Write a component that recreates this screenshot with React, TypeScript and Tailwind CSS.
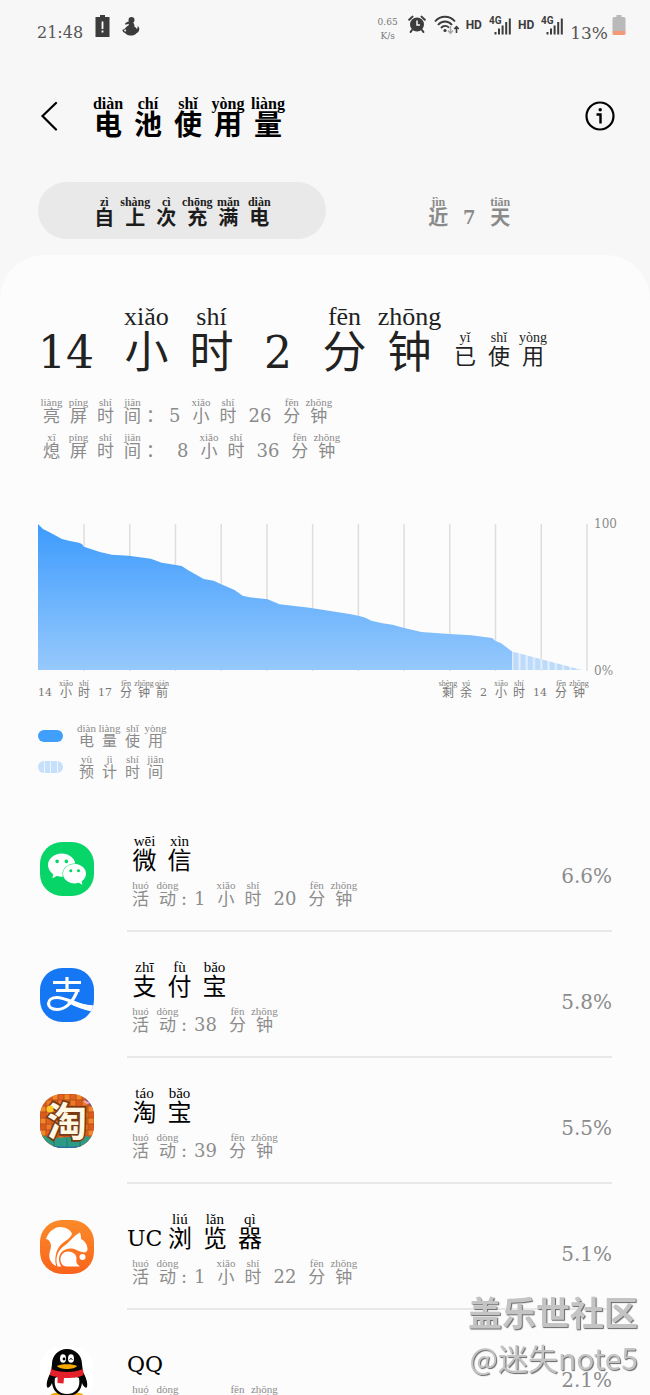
import { useState } from 'react';
import type { ReactNode } from 'react';
import { SiWechat } from 'react-icons/si';

interface Size {
  cell: string;
  han: string;
  pinyin: string;
  num: string;
  punct: string;
}

const sizes: Record<string, Size> = {
  title: { cell: 'w-10', han: 'text-[28px] leading-7 font-bold', pinyin: 'text-base leading-4 font-bold', num: '', punct: '' },
  tab: { cell: 'w-[31px]', han: 'text-xl leading-5 font-bold', pinyin: 'text-xs leading-3 font-bold', num: 'w-[31px] text-center text-lg leading-5 font-bold', punct: '' },
  hero: { cell: 'w-[65px]', han: 'text-[44px] leading-[44px]', pinyin: 'text-[26px] leading-7', num: 'mx-5 first:ml-0 text-[44px] leading-[44px]', punct: '' },
  heroNote: { cell: 'w-[34px]', han: 'text-[22px] leading-6', pinyin: 'text-sm leading-[14px]', num: '', punct: '' },
  line: { cell: 'w-[27px]', han: 'text-[17px] leading-4', pinyin: 'text-[11px] leading-3', num: 'mx-[7px] text-lg leading-4', punct: 'w-4 text-lg leading-4' },
  activity: { cell: 'w-[27px]', han: 'text-[17px] leading-4', pinyin: 'text-[11px] leading-3', num: 'mx-[7px] text-lg leading-4', punct: 'w-1.5 text-center text-lg leading-4' },
  axis: { cell: 'w-[18px]', han: 'text-xs leading-[10px]', pinyin: 'text-[8px] leading-2', num: 'mx-[5px] first:ml-0 text-[11px] leading-[10px]', punct: '' },
  legend: { cell: 'w-[23px]', han: 'text-[15px] leading-4', pinyin: 'text-[11px] leading-[10px]', num: '', punct: '' },
  name: { cell: 'w-[35px]', han: 'text-2xl leading-6', pinyin: 'text-[15px] leading-4', num: 'text-[22px] leading-6', punct: '' },
};

// "小xiǎo 时shí 2" -> each CJK char carries its reading, everything else is printed as is.
// A doubled space leaves an empty token, which is a small spacer.
function Pinyin({ text, size, className = '' }: { text: string; size: keyof typeof sizes; className?: string }) {
  const s = sizes[size];
  return (
    <span className={`inline-flex items-end whitespace-nowrap ${className}`}>
      {text.split(' ').map((token, i) => {
        if (token === '') return <span key={i} className="w-2" />;
        if (/^[\u4e00-\u9fff]/.test(token)) {
          return (
            <ruby key={i} className={`flex flex-col-reverse items-center ${s.cell} ${s.han}`}>
              {token[0]}
              <rt className={`font-['Liberation_Serif',serif] ${s.pinyin}`}>{token.slice(1)}</rt>
            </ruby>
          );
        }
        const isPunct = token === ':' || token === '：';
        return <span key={i} className={isPunct ? s.punct : s.num}>{token}</span>;
      })}
    </span>
  );
}

function AlarmIcon() {
  return (
    <svg viewBox="0 0 18 18" className="mr-0.5 size-[18px]" fill="none" stroke="#3c3c3c">
      <circle cx="9" cy="9.5" r="7" fill="#3c3c3c" stroke="none" />
      <path d="M1.200 4.800 L4.500 1.600 M16.800 4.800 L13.500 1.600 M4 15 L2.600 17 M14 15 L15.400 17" strokeWidth="2" strokeLinecap="round" />
      <path d="M9 5.5 V10 H12" stroke="#f7f7f7" strokeWidth="1.5" />
    </svg>
  );
}

function WifiIcon() {
  return (
    <svg viewBox="0 0 26 20" className="h-5 w-[26px]" fill="none" stroke="#3c3c3c" strokeWidth="1.9">
      <path d="M1 6.5 C6.5 .2 15.5 .2 21 6.5 M4 10 C8 5.4 14 5.4 18 10 M7 13 C9.4 10.4 12.6 10.4 15 12.6" />
      <circle cx="11" cy="15.5" r="1.6" fill="#3c3c3c" stroke="none" />
      <path d="M16.5 11 V17.5 M14 15.5 L16.5 18.3 L19 15.5" stroke="#aaa" strokeWidth="1.5" />
      <path d="M22.5 18 V12 M20.3 14 L22.5 11.7 L24.7 14" strokeWidth="1.6" />
    </svg>
  );
}

function Signal() {
  return (
    <span className="flex items-start gap-[7px]">
      <span className="pt-0.5 font-[Roboto,sans-serif] text-xs leading-4 font-bold">HD</span>
      <svg viewBox="0 0 23 20" className="h-5 w-[23px]" fill="#3c3c3c">
        <text x="0" y="8.500" fontFamily="Roboto, sans-serif" fontSize="10" fontWeight="700">4G</text>
        <path d="M5.5 17h2v2.500h-2z M9 13.500h2v6H9z M12.600 10.500h2v9h-2z M16.200 7h2v12.500h-2z M19.800 3.500h2v16h-2z" />
      </svg>
    </span>
  );
}

function StatusBar() {
  return (
    <div className="flex h-12 items-start justify-between pt-[15px] pr-6 pl-[37px] text-[#3c3c3c]">
      <div className="flex items-start gap-3">
        <span className="pt-2 text-base leading-5 text-[#555]">21:48</span>
        <svg viewBox="0 0 15 22" className="h-[22px] w-[15px]">
          <path d="M5 0h5v2h4.5v20H.5V2H5z" fill="#3c3c3c" />
          <path d="M7.5 6.5v7.5 M7.5 15.5v2" stroke="#fff" strokeWidth="1.8" />
        </svg>
        <svg viewBox="0 0 18 20" className="mt-px h-5 w-[18px]" fill="#3c3c3c">
          <circle cx="9.5" cy="4" r="3" />
          <path d="M3 7.6 C4.5 6 6.5 5.4 8 5.6 L10.5 6 C12.5 7.5 12.6 9.5 12.4 10.8 C14 11.4 14.6 12.4 14.6 13 C15.6 12.6 16 11 15.4 9.8 C18.5 11.5 17.5 16 14.5 17.2 C12.5 20 6 20.5 3.6 17.4 C1.6 17 .2 15.5 .4 13.8 C3 14 3.4 11 6.4 9.6 L7 7.8 L3.4 8.8z" />
          <circle cx="3.2" cy="14.6" r="1" fill="#f7f7f7" />
        </svg>
      </div>
      <div className="flex items-start gap-1.5">
        <span className="mr-1 text-center text-[9px] leading-[14px] text-[#777]">0.65<br />K/s</span>
        <AlarmIcon />
        <WifiIcon />
        <Signal />
        <Signal />
        <span className="flex items-start gap-1">
          <span className="pt-2 text-[17px] leading-5 text-[#555]">13%</span>
          <svg viewBox="0 0 14 20" className="h-5 w-3.5">
            <path d="M4.5 0h5v2H12a1.5 1.5 0 0 1 1.5 1.5V16H.5V3.500A1.5 1.5 0 0 1 2 2h2.500z" fill="#b9b9b9" />
            <path d="M.5 16h13v2.500a1.5 1.5 0 0 1-1.500 1.500H2A1.500 1.500 0 0 1 .5 18.500z" fill="#f29a78" />
          </svg>
        </span>
      </div>
    </div>
  );
}

const levels: [number, number][] = [
  [0, 0], [5, 5], [12, 8.5], [24, 15], [32, 17], [41, 18.7], [44, 20], [46, 22.7], [62, 28], [74, 30.7],
  [91, 31.7], [113, 34.7], [124, 38.7], [132, 40], [144, 42], [150, 46], [155, 48.7], [166, 55], [176, 56.7],
  [183, 60], [197, 66], [205, 71.7], [212, 73.3], [230, 75.3], [242, 80.3], [272, 83.7], [312, 90], [322, 92],
  [328, 93.7], [334, 96.7], [345, 99.3], [355, 100.7], [367, 104], [384, 108], [412, 110], [434, 111.3],
  [455, 114], [458, 116.7], [464, 119.3], [475, 127.5],
];

function BatteryChart() {
  const area = levels.map(([x, y]) => `L${x} ${y}`).join(' ');
  return (
    <svg viewBox="0 0 551 147" preserveAspectRatio="none" className="h-[147px] min-w-0 flex-1" role="img" aria-label="电量使用">
      <defs>
        <linearGradient id="usage" x1="0" y1="0" x2="0" y2="1">
          <stop offset="0" stopColor="#3d9bfd" />
          <stop offset="1" stopColor="#96c9fc" />
        </linearGradient>
        <pattern id="stripes" width="7.3" height="147" patternUnits="userSpaceOnUse">
          <rect width="7.3" height="147" fill="#e3effc" />
          <rect x="1.500" width="5.300" height="147" fill="#bddafa" />
        </pattern>
      </defs>
      {Array.from({ length: 12 }, (_, i) => (
        <rect key={i} x={45.4 + i * 45.8} y="0" width="1.5" height="147" fill="#dedede" />
      ))}
      <path d={`M0 146 ${area} L475 146z`} fill="url(#usage)" />
      <path d="M475 127.5 L545 146 H475z" fill="url(#stripes)" />
    </svg>
  );
}

function AlipayLogo() {
  return (
    <svg viewBox="0 0 54 54" className="size-full" fill="none" stroke="#fff" strokeWidth="3.200">
      <path d="M27 9 V23 M13 14.500 H41 M16 22.500 H39.500" />
      <path d="M37.500 22 C34 32 27 41.500 17 41.500 C11 41.500 8.500 38.500 8.500 35.500 C8.500 32 12 29.500 17 29.500 C24 29.500 34 35 46 38.500" />
      <path d="M30 32.500 C38 35.500 45 36.500 54 37.500 L51.500 43.500 C44 42 35 39 27 34z" fill="#fff" stroke="none" />
    </svg>
  );
}

function TaobaoLogo() {
  return (
    <svg viewBox="0 0 54 54" className="size-full">
      <defs>
        <pattern id="bricks" width="12" height="12" patternUnits="userSpaceOnUse">
          <rect width="12" height="12" fill="#b9501a" />
          <rect x=".5" y=".5" width="5" height="5" fill="#f0872a" />
          <rect x="6.500" y=".5" width="5" height="5" fill="#e2631f" />
          <rect x=".5" y="6.500" width="5" height="5" fill="#de5a1c" />
          <rect x="6.500" y="6.500" width="5" height="5" fill="#ee7a25" />
        </pattern>
      </defs>
      <rect width="54" height="54" fill="url(#bricks)" />
      <path d="M42 0 H54 V14 L48 10z" fill="#6d5ba8" />
      <path d="M44 7 l3 2 l3 -1" stroke="#f4a6c0" strokeWidth="2" fill="none" />
      <path d="M0 40 C12 48 36 40 54 43 V54 H0z" fill="#2d9a86" />
      <path d="M0 49 C16 54 40 54 54 49 V54 H0z" fill="#2a6fb0" />
      <path d="M14 44 V54 M27 44 V54 M40 43 V54" stroke="#1f7a6c" />
      <text x="27" y="42" textAnchor="middle" fontSize="40" fontWeight="700" fontFamily="'Noto Sans CJK SC', sans-serif" fill="#fff8e4" stroke="#7a3a12" strokeWidth="3.500" paintOrder="stroke">淘</text>
      <circle cx="10" cy="15" r="3.500" fill="#ffc928" />
    </svg>
  );
}

function UcLogo() {
  return (
    <svg viewBox="0 0 54 54" className="size-full" fill="#fff">
      <path d="M6 19 C9 10 16 7 20 7 C26 7 31 10 32 14 C31 17 27 20 24 22 C17 27 14 35 16 46 C10 43 8 37 10 31 C12 26 11 20 6 19z" />
      <path d="M40 12.500 C41 15 41 17 41 19 C45 21 47.500 25 47.500 29 C47.500 32 45 33 42 32 C37 31 36 29 32 28.500 C24 27.500 19 33 19 39 C19 42 20 44.500 21.500 46.500 H17.500 C14.500 38 18 30 24 26 C31 21 33 16 40 12.500z" />
      <path d="M28 31.500 C33 31.500 37 35 36.500 39 C36 42 36.500 44 40 46.500 H27 C22.500 46.500 20.500 43 20.500 39.500 C20.500 35 24 31.500 28 31.500z" />
      <circle cx="42.500" cy="37" r="3" />
    </svg>
  );
}

function QqLogo() {
  return (
    <svg viewBox="0 0 54 54" className="size-full">
      <ellipse cx="19" cy="50" rx="9" ry="3.500" fill="#f5a800" />
      <ellipse cx="35" cy="50" rx="9" ry="3.500" fill="#f5a800" />
      <path d="M27 3 C36 3 42 10 42 18 L43 26 C46 31 48 37 47 41 C46 43 43 40 42 37 C41 45 36 50 27 50 C18 50 13 45 12 37 C11 40 8 43 7 41 C6 37 8 31 11 26 L12 18 C12 10 18 3 27 3z" fill="#050505" />
      <path d="M15 32 C18 30 36 30 39 32 C41 42 35 48 27 48 C19 48 13 42 15 32z" fill="#fff" />
      <ellipse cx="23" cy="12.500" rx="3" ry="4.300" fill="#fff" />
      <ellipse cx="31" cy="12.500" rx="3" ry="4.300" fill="#fff" />
      <circle cx="24" cy="13" r="1.400" />
      <path d="M29.500 13.500 q1.500 -2 3 0" stroke="#000" fill="none" />
      <path d="M17 20 C20 17.500 34 17.500 37 20 C35 24 19 24 17 20z" fill="#f5a800" />
      <path d="M11 23 C20 27 34 27 43 23 L43.500 29 C38 32 31 32 24 32 L23.500 37.500 L17.500 37 V31 C14 30.500 12 30 10 29z" fill="#e5202b" />
    </svg>
  );
}

interface AppUsage {
  id: string;
  name: string;
  activity: string;
  percent: string;
  tile: string;
  logo: ReactNode;
}

const apps: AppUsage[] = [
  { id: 'wechat', name: '微wēi 信xìn', activity: '1 小xiǎo 时shí 20 分fēn 钟zhōng', percent: '6.6%', tile: 'bg-[#07d568]', logo: <SiWechat className="size-[38px] text-white" /> },
  { id: 'alipay', name: '支zhī 付fù 宝bǎo', activity: '38 分fēn 钟zhōng', percent: '5.8%', tile: 'bg-[#1677f5]', logo: <AlipayLogo /> },
  { id: 'taobao', name: '淘táo 宝bǎo', activity: '39 分fēn 钟zhōng', percent: '5.5%', tile: 'bg-[#e2631f]', logo: <TaobaoLogo /> },
  { id: 'uc', name: 'UC 浏liú 览lǎn 器qì', activity: '1 小xiǎo 时shí 22 分fēn 钟zhōng', percent: '5.1%', tile: 'bg-linear-to-b from-[#fb8a2a] to-[#f9631a]', logo: <UcLogo /> },
  { id: 'qq', name: 'QQ', activity: '17 分fēn 钟zhōng', percent: '2.1%', tile: 'bg-white', logo: <QqLogo /> },
];

function AppRow({ app }: { app: AppUsage }) {
  return (
    <li className="flex items-center gap-[33px]">
      <span className={`flex size-[54px] shrink-0 items-center justify-center overflow-hidden rounded-[22px] ${app.tile}`}>
        {app.logo}
      </span>
      <div className="flex h-[126px] flex-1 items-center justify-between border-b-2 border-[#e8e8e8]">
        <div className="flex flex-col gap-1.5 pt-1">
          <Pinyin text={app.name} size="name" className="h-10 text-black" />
          <Pinyin text={`活huó 动dòng : ${app.activity}`} size="activity" className="text-[#8c8c8c]" />
        </div>
        <span className="pt-4 text-xl leading-5 text-[#8c8c8c]">{app.percent}</span>
      </div>
    </li>
  );
}

export default function App() {
  const [tab, setTab] = useState<'charge' | 'week'>('charge');
  const tabClass = (active: boolean) =>
    `flex h-[57px] flex-1 cursor-pointer items-center justify-center rounded-full pt-0.5 ${active ? 'bg-[#e9e9e9] text-[#1c1c1c]' : 'text-[#8a8a8a]'}`;

  return (
    <div className="flex h-screen flex-col overflow-hidden bg-[#f7f7f7] font-['DejaVu_Serif','Noto_Sans_CJK_SC',serif]">
      <StatusBar />

      <header className="flex items-center pt-11 pr-[34px] pl-10">
        <button type="button" aria-label="返回" className="cursor-pointer">
          <svg viewBox="0 0 18 30" className="h-[30px] w-[18px]" fill="none" stroke="#000" strokeWidth="2.2" strokeLinecap="round">
            <path d="M16 2 L2.500 15 L16 28.500" />
          </svg>
        </button>
        <h1 className="ml-[30px] flex-1 pt-1">
          <Pinyin text="电diàn 池chí 使shǐ 用yòng 量liàng" size="title" className="align-top" />
        </h1>
        <button type="button" aria-label="信息" className="cursor-pointer">
          <svg viewBox="0 0 32 32" className="size-8" fill="none" stroke="#000" strokeWidth="2.2">
            <circle cx="16" cy="16" r="13.500" />
            <path d="M12.500 14.500 H16.500 V23.500" strokeWidth="2.400" />
            <circle cx="16.200" cy="9.800" r="1.700" fill="#000" stroke="none" />
          </svg>
        </button>
      </header>

      <nav className="mt-[42px] mb-4 flex pr-[37px] pl-[38px]">
        <button type="button" className={tabClass(tab === 'charge')} onClick={() => setTab('charge')}>
          <Pinyin text="自zì 上shàng 次cì 充chōng 满mǎn 电diàn" size="tab" />
        </button>
        <button type="button" className={tabClass(tab === 'week')} onClick={() => setTab('week')}>
          <Pinyin text="近jìn 7 天tiān" size="tab" />
        </button>
      </nav>

      <main className="min-h-0 flex-1 overflow-y-auto rounded-t-[44px] bg-[#fcfcfc] pt-12 pr-[34px] pl-[38px] [scrollbar-width:none]">
        <div className="flex items-end text-[#222]">
          <Pinyin text="14 小xiǎo 时shí 2 分fēn 钟zhōng" size="hero" />
          <Pinyin text="已yǐ 使shǐ 用yòng" size="heroNote" className="mb-1.5 ml-1.5" />
        </div>

        <div className="mt-[21px] flex flex-col items-start gap-[7px] text-[#8a8a8a]">
          <Pinyin text="亮liàng 屏píng 时shí 间jiān ： 5 小xiǎo 时shí 26 分fēn 钟zhōng" size="line" />
          <Pinyin text="熄xī 屏píng 时shí 间jiān ：  8 小xiǎo 时shí 36 分fēn 钟zhōng" size="line" />
        </div>

        <div className="mt-[65px] flex gap-1.5">
          <BatteryChart />
          <div className="-my-1.5 flex w-[22px] flex-col justify-between text-xs leading-3 text-[#8a8a8a]">
            <span>100</span>
            <span className="whitespace-nowrap">0%</span>
          </div>
        </div>
        <div className="mt-[9px] mr-7 flex justify-between text-[#777]">
          <Pinyin text="14 小xiǎo 时shí 17 分fēn 钟zhōng 前qián" size="axis" />
          <Pinyin text="剩shèng 余yú 2 小xiǎo 时shí 14 分fēn 钟zhōng" size="axis" />
        </div>

        <ul className="mt-[25px] flex flex-col gap-[5px] text-[#8a8a8a]">
          <li className="flex items-center gap-3">
            <span className="h-3 w-[25px] rounded-full bg-[#3f9ffa]" />
            <Pinyin text="电diàn 量liàng 使shǐ 用yòng" size="legend" />
          </li>
          <li className="flex items-center gap-3">
            <span className="flex h-3 w-[25px] justify-evenly overflow-hidden rounded-full bg-[#c6dffa]">
              <span className="w-px bg-[#edf5fd]" />
              <span className="w-px bg-[#edf5fd]" />
              <span className="w-px bg-[#edf5fd]" />
            </span>
            <Pinyin text="预yù 计jì 时shí 间jiān" size="legend" />
          </li>
        </ul>

        <ul className="mt-[26px] pr-1 pl-0.5">
          {apps.map(app => <AppRow key={app.id} app={app} />)}
        </ul>
      </main>

      <div className="pointer-events-none fixed right-3 bottom-[18px] flex flex-col items-end font-['Noto_Sans_CJK_SC',sans-serif] text-[#c4c4c4] [text-shadow:1px_1px_1px_#666]">
        <span className="text-[34px] leading-[50px] font-bold">盖乐世社区</span>
        <span className="text-[30px] leading-10">@迷失note5</span>
      </div>
    </div>
  );
}
